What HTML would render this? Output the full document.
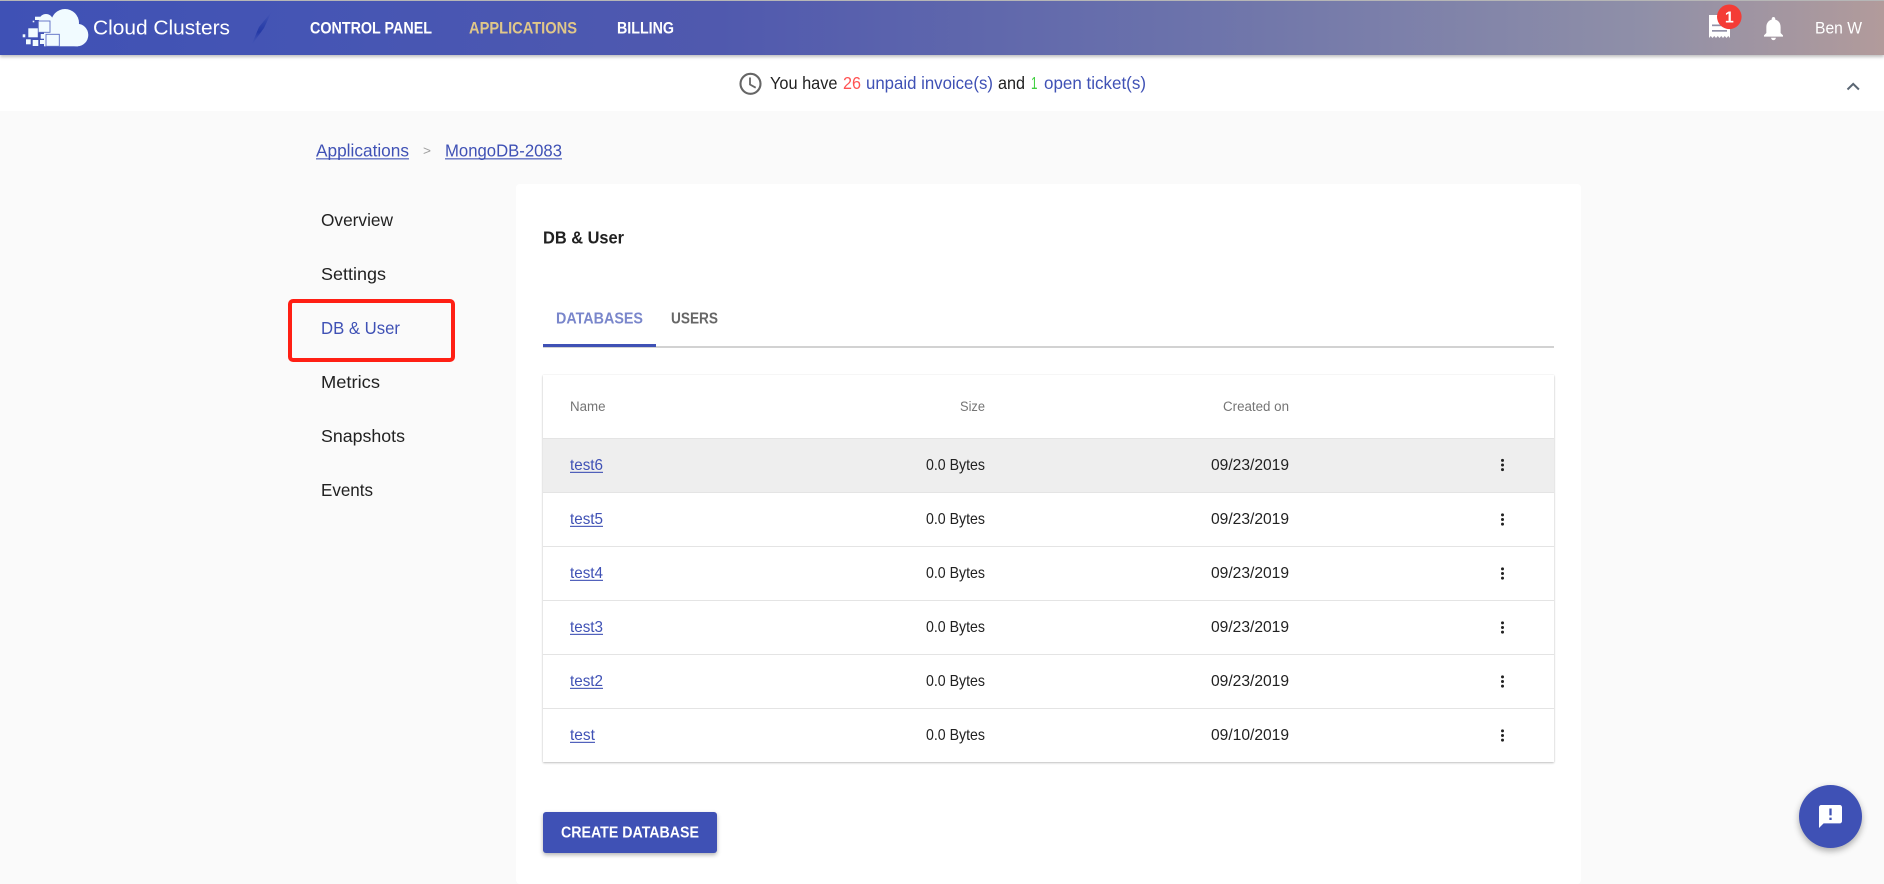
<!DOCTYPE html>
<html lang="en">
<head>
<meta charset="utf-8">
<title>DB &amp; User - Cloud Clusters</title>
<style>
html,body{margin:0;padding:0;width:1884px;height:880px;overflow:hidden;background:#fafafa;font-family:"Liberation Sans",sans-serif}
.box{position:absolute;box-sizing:border-box}
#topline{left:0;top:0;width:1884px;height:1px;background:#b9b9b9}
#header{left:0;top:1px;width:1884px;height:54px;box-shadow:0 2px 3px rgba(0,0,0,.25);z-index:3;
background:linear-gradient(to right,#3f51b5 0,#4555b4 300px,#5059ae 720px,#6b72ab 1180px,#8f8fa8 1640px,#b29b9b 1884px)}
#notice{left:0;top:55px;width:1884px;height:56px;background:#fff}
#card{left:516px;top:184px;width:1065px;height:700px;background:#fff;border-radius:4px}
#tabline{left:543px;top:346px;width:1011px;height:2px;background:#d2d2d2}
#tabind{left:543px;top:344px;width:113px;height:2.5px;background:#3f51b5}
#table{left:543px;top:375px;width:1011px;height:387px;background:#fff;box-shadow:0 1px 2px rgba(0,0,0,.24),0 0 1px rgba(0,0,0,.1)}
.row{position:absolute;left:0;width:1011px;height:54px;border-top:1px solid #e4e4e4;box-sizing:border-box}
#btn{left:543px;top:812px;width:174px;height:41px;background:#3f51b5;border-radius:3px;box-shadow:0 2px 4px rgba(0,0,0,.3)}
#redbox{left:288px;top:299px;width:167px;height:63px;border:4.5px solid #ff1f14;border-radius:5px}
#fab{left:1799px;top:785px;width:63px;height:63px;border-radius:50%;background:#3f51b5;box-shadow:0 3px 7px rgba(0,0,0,.32)}
svg{position:absolute;left:0;top:0;z-index:5}
text{font-family:"Liberation Sans",sans-serif}
.nav{font-weight:bold;font-size:16.4px;fill:#fff}
.side{font-size:17.8px;fill:#212121}
.cell{font-size:15.9px;fill:#212121}
.head{font-size:14.2px;fill:#757575}
.lnk{fill:#3f51b5}
</style>
</head>
<body>
<div class="box" id="topline"></div>
<div class="box" id="header"></div>
<div class="box" id="notice"></div>
<div class="box" id="card"></div>
<div class="box" id="tabline"></div>
<div class="box" id="tabind"></div>
<div class="box" id="table">
  <div class="row" style="top:63px;background:#eee"></div>
  <div class="row" style="top:117px"></div>
  <div class="row" style="top:171px"></div>
  <div class="row" style="top:225px"></div>
  <div class="row" style="top:279px"></div>
  <div class="row" style="top:333px"></div>
</div>
<div class="box" id="btn"></div>
<div class="box" id="redbox"></div>
<div class="box" id="fab"></div>

<svg width="1884" height="880" viewBox="0 0 1884 880" xmlns="http://www.w3.org/2000/svg">
  <defs>
    <linearGradient id="sl" x1="0" y1="0" x2="0" y2="1">
      <stop offset="0" stop-color="#3f51b5" stop-opacity="0"/>
      <stop offset=".3" stop-color="#3347ad"/>
      <stop offset=".6" stop-color="#2439a6"/>
      <stop offset="1" stop-color="#3f51b5" stop-opacity="0"/>
    </linearGradient>
  </defs>

  <!-- logo -->
  <g fill="#f1fbff">
    <circle cx="65" cy="23" r="14"/>
    <circle cx="77" cy="35" r="11.3"/>
    <circle cx="46" cy="21" r="7"/>
    <rect x="44" y="22" width="34" height="24.3"/>
  </g>
  <g fill="#f1fbff" stroke="#5b6cc4" stroke-width=".9">
    <rect x="46" y="34.3" width="13.3" height="12"/>
    <rect x="38.3" y="21" width="11.7" height="11.3"/>
  </g>
  <g fill="#f1fbff">
    <rect x="28.3" y="28.3" width="9.5" height="9"/>
    <rect x="35" y="16.7" width="5.7" height="3.3"/>
    <rect x="26" y="39.3" width="4.7" height="5"/>
    <rect x="32.7" y="40" width="5.6" height="6"/>
    <rect x="40" y="40" width="4" height="4"/>
    <rect x="40.7" y="34" width="4.3" height="4.7"/>
    <rect x="22.7" y="34.3" width="2.6" height="3"/>
    <rect x="32.7" y="20.7" width="1.6" height="1.6"/>
  </g>
  <text x="93" y="34.5" font-size="20.5" fill="#fff" textLength="137" lengthAdjust="spacingAndGlyphs">Cloud Clusters</text>
  <polygon points="272,11 259,27 251,46 264,28" fill="url(#sl)"/>

  <!-- nav -->
  <text class="nav" x="310" y="33.5" textLength="122" lengthAdjust="spacingAndGlyphs">CONTROL PANEL</text>
  <text class="nav" x="469" y="33.5" textLength="108" lengthAdjust="spacingAndGlyphs" style="fill:#e0c789">APPLICATIONS</text>
  <text class="nav" x="617" y="33.5" textLength="57" lengthAdjust="spacingAndGlyphs">BILLING</text>

  <!-- invoice icon -->
  <path d="M1709 15h21v23l-1.75-2-1.75 2-1.75-2-1.75 2-1.75-2-1.75 2-1.75-2-1.75 2-1.75-2-1.75 2-1.75-2-1.75 2z" fill="#fff"/>
  <rect x="1712" y="24.5" width="15" height="1.7" fill="#9291a7"/>
  <rect x="1712" y="30" width="15" height="1.7" fill="#9291a7"/>
  <circle cx="1729.3" cy="16.8" r="12.3" fill="#f43c36"/>
  <text x="1729.3" y="22.5" font-size="16" font-weight="bold" fill="#fff" text-anchor="middle">1</text>
  <!-- bell -->
  <g transform="translate(1759.2 14) scale(1.19)">
    <path fill="#fff" d="M12 22c1.1 0 2-.9 2-2h-4c0 1.1.89 2 2 2zm6-6v-5c0-3.07-1.64-5.64-4.5-6.32V4c0-.83-.67-1.5-1.5-1.5s-1.5.67-1.5 1.5v.68C7.63 5.36 6 7.92 6 11v5l-2 2v1h16v-1l-2-2z"/>
  </g>
  <text x="1815" y="33.5" font-size="16.6" fill="#fff" textLength="47" lengthAdjust="spacingAndGlyphs">Ben W</text>

  <!-- notice -->
  <circle cx="750.5" cy="83.8" r="10" fill="none" stroke="#666" stroke-width="2.1"/>
  <path d="M750 77.5v7l5.7 3.2" fill="none" stroke="#666" stroke-width="1.8"/>
  <g font-size="17.6">
    <text x="770" y="89" fill="#212121" textLength="67.5" lengthAdjust="spacingAndGlyphs">You have</text>
    <text x="843" y="89" fill="#ff5252" textLength="18" lengthAdjust="spacingAndGlyphs">26</text>
    <text x="866" y="89" class="lnk" textLength="127" lengthAdjust="spacingAndGlyphs">unpaid invoice(s)</text>
    <text x="998" y="89" fill="#212121" textLength="27" lengthAdjust="spacingAndGlyphs">and</text>
    <text x="1031" y="89" fill="#3ecf3e" textLength="6.5" lengthAdjust="spacingAndGlyphs">1</text>
    <text x="1044" y="89" class="lnk" textLength="102" lengthAdjust="spacingAndGlyphs">open ticket(s)</text>
  </g>
  <path d="M1847.5 89.5l5.7-5.6 5.7 5.6" fill="none" stroke="#5a6673" stroke-width="2"/>

  <!-- breadcrumb -->
  <g font-size="17.6">
    <text x="316" y="156.5" class="lnk" textLength="93" lengthAdjust="spacingAndGlyphs">Applications</text>
    <rect x="316" y="158.3" width="93" height="1.1" fill="#3f51b5"/>
    <text x="423" y="155" font-size="13" fill="#9e9e9e" textLength="8" lengthAdjust="spacingAndGlyphs">&gt;</text>
    <text x="445" y="156.5" class="lnk" textLength="117" lengthAdjust="spacingAndGlyphs">MongoDB-2083</text>
    <rect x="445" y="158.3" width="117" height="1.1" fill="#3f51b5"/>
  </g>

  <!-- sidebar -->
  <text class="side" x="321" y="226" textLength="72" lengthAdjust="spacingAndGlyphs">Overview</text>
  <text class="side" x="321" y="280" textLength="65" lengthAdjust="spacingAndGlyphs">Settings</text>
  <text class="side" x="321" y="334" textLength="79" lengthAdjust="spacingAndGlyphs" style="fill:#3f51b5">DB &amp; User</text>
  <text class="side" x="321" y="388" textLength="59" lengthAdjust="spacingAndGlyphs">Metrics</text>
  <text class="side" x="321" y="442" textLength="84" lengthAdjust="spacingAndGlyphs">Snapshots</text>
  <text class="side" x="321" y="496" textLength="52" lengthAdjust="spacingAndGlyphs">Events</text>

  <!-- heading + tabs -->
  <text x="543" y="243.5" font-size="17.6" font-weight="bold" fill="#212121" textLength="81" lengthAdjust="spacingAndGlyphs">DB &amp; User</text>
  <text x="556" y="323.7" font-size="15.6" font-weight="bold" fill="#7986cb" textLength="87" lengthAdjust="spacingAndGlyphs">DATABASES</text>
  <text x="671" y="323.7" font-size="15.6" font-weight="bold" fill="#666" textLength="47" lengthAdjust="spacingAndGlyphs">USERS</text>

  <!-- table head -->
  <text class="head" x="570" y="411" textLength="35.5" lengthAdjust="spacingAndGlyphs">Name</text>
  <text class="head" x="960" y="411" textLength="25" lengthAdjust="spacingAndGlyphs">Size</text>
  <text class="head" x="1223" y="411" textLength="66" lengthAdjust="spacingAndGlyphs">Created on</text>

  <!-- rows -->
  <g class="cell">
    <text class="cell lnk" x="570" y="470" textLength="33" lengthAdjust="spacingAndGlyphs">test6</text>
    <rect x="570" y="471.8" width="33" height="1.1" fill="#3f51b5"/>
    <text class="cell" x="926" y="470" textLength="59" lengthAdjust="spacingAndGlyphs">0.0 Bytes</text>
    <text class="cell" x="1211" y="470" textLength="78" lengthAdjust="spacingAndGlyphs">09/23/2019</text>

    <text class="cell lnk" x="570" y="524" textLength="33" lengthAdjust="spacingAndGlyphs">test5</text>
    <rect x="570" y="525.8" width="33" height="1.1" fill="#3f51b5"/>
    <text class="cell" x="926" y="524" textLength="59" lengthAdjust="spacingAndGlyphs">0.0 Bytes</text>
    <text class="cell" x="1211" y="524" textLength="78" lengthAdjust="spacingAndGlyphs">09/23/2019</text>

    <text class="cell lnk" x="570" y="578" textLength="33" lengthAdjust="spacingAndGlyphs">test4</text>
    <rect x="570" y="579.8" width="33" height="1.1" fill="#3f51b5"/>
    <text class="cell" x="926" y="578" textLength="59" lengthAdjust="spacingAndGlyphs">0.0 Bytes</text>
    <text class="cell" x="1211" y="578" textLength="78" lengthAdjust="spacingAndGlyphs">09/23/2019</text>

    <text class="cell lnk" x="570" y="632" textLength="33" lengthAdjust="spacingAndGlyphs">test3</text>
    <rect x="570" y="633.8" width="33" height="1.1" fill="#3f51b5"/>
    <text class="cell" x="926" y="632" textLength="59" lengthAdjust="spacingAndGlyphs">0.0 Bytes</text>
    <text class="cell" x="1211" y="632" textLength="78" lengthAdjust="spacingAndGlyphs">09/23/2019</text>

    <text class="cell lnk" x="570" y="686" textLength="33" lengthAdjust="spacingAndGlyphs">test2</text>
    <rect x="570" y="687.8" width="33" height="1.1" fill="#3f51b5"/>
    <text class="cell" x="926" y="686" textLength="59" lengthAdjust="spacingAndGlyphs">0.0 Bytes</text>
    <text class="cell" x="1211" y="686" textLength="78" lengthAdjust="spacingAndGlyphs">09/23/2019</text>

    <text class="cell lnk" x="570" y="740" textLength="25" lengthAdjust="spacingAndGlyphs">test</text>
    <rect x="570" y="741.8" width="25" height="1.1" fill="#3f51b5"/>
    <text class="cell" x="926" y="740" textLength="59" lengthAdjust="spacingAndGlyphs">0.0 Bytes</text>
    <text class="cell" x="1211" y="740" textLength="78" lengthAdjust="spacingAndGlyphs">09/10/2019</text>
  </g>

  <!-- kebabs -->
  <g fill="#212121">
    <g transform="translate(1502.5 465)"><circle cy="-4.6" r="1.5"/><circle r="1.5"/><circle cy="4.6" r="1.5"/></g>
    <g transform="translate(1502.5 519.5)"><circle cy="-4.6" r="1.5"/><circle r="1.5"/><circle cy="4.6" r="1.5"/></g>
    <g transform="translate(1502.5 573.5)"><circle cy="-4.6" r="1.5"/><circle r="1.5"/><circle cy="4.6" r="1.5"/></g>
    <g transform="translate(1502.5 627.5)"><circle cy="-4.6" r="1.5"/><circle r="1.5"/><circle cy="4.6" r="1.5"/></g>
    <g transform="translate(1502.5 681.5)"><circle cy="-4.6" r="1.5"/><circle r="1.5"/><circle cy="4.6" r="1.5"/></g>
    <g transform="translate(1502.5 735.5)"><circle cy="-4.6" r="1.5"/><circle r="1.5"/><circle cy="4.6" r="1.5"/></g>
  </g>

  <!-- button -->
  <text x="561" y="837.5" font-size="16" font-weight="bold" fill="#fff" textLength="138" lengthAdjust="spacingAndGlyphs">CREATE DATABASE</text>

  <!-- fab icon -->
  <g transform="translate(1816.7 802.7) scale(1.15)">
    <path fill="#fff" d="M20 2H4c-1.1 0-1.99.9-1.99 2L2 22l4-4h14c1.1 0 2-.9 2-2V4c0-1.1-.9-2-2-2zm-7 9h-2V5h2v6zm0 4h-2v-2h2v2z"/>
  </g>
</svg>
</body>
</html>
